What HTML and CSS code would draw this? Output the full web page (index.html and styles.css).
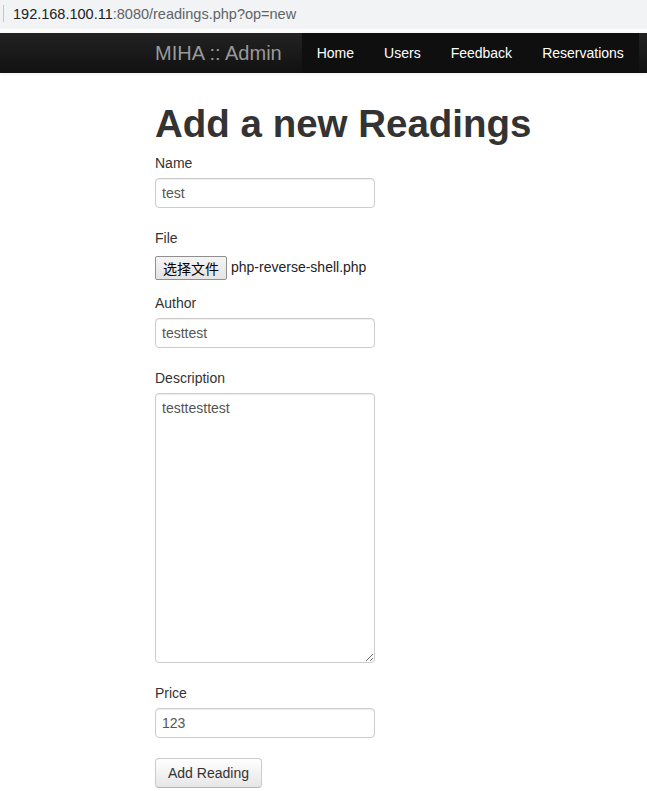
FILE: index.html
```html
<!DOCTYPE html>
<html>
<head>
<meta charset="utf-8">
<title>MIHA :: Admin</title>
<link rel="stylesheet" href="styles.css">
</head>
<body>
<div class="addressbar">
  <span class="sep"></span>
  <span class="url"><span class="host">192.168.100.11</span><span class="path">:8080/readings.php?op=new</span></span>
</div>
<div class="gap"></div>
<div class="navbar">
  <div class="navbar-inner">
    <a class="brand" href="#">MIHA :: Admin</a>
    <ul class="nav">
      <li><a href="#">Home</a></li>
      <li><a href="#">Users</a></li>
      <li><a href="#">Feedback</a></li>
      <li><a href="#">Reservations</a></li>
    </ul>
  </div>
</div>
<div class="container">
  <h1>Add a new Readings</h1>
  <form class="form">
    <div class="field">
      <label class="label">Name</label>
      <input class="input" type="text" value="test">
    </div>
    <div class="field field-file">
      <label class="label">File</label>
      <div class="file-row">
        <span class="file-btn">选择文件</span>
        <span class="file-name">php-reverse-shell.php</span>
      </div>
    </div>
    <div class="field">
      <label class="label">Author</label>
      <input class="input" type="text" value="testtest">
    </div>
    <div class="field">
      <label class="label">Description</label>
      <textarea class="textarea">testtesttest</textarea>
    </div>
    <div class="field">
      <label class="label">Price</label>
      <input class="input" type="text" value="123">
    </div>
    <button class="btn" type="button">Add Reading</button>
  </form>
</div>
</body>
</html>
```
FILE: styles.css
```css
html, body {
  margin: 0;
  padding: 0;
  background: #fff;
}
body {
  font-family: "Liberation Sans", Arial, sans-serif;
  font-size: 14px;
  line-height: 20px;
  color: #333;
}
.addressbar {
  height: 29px;
  background: #f1f3f4;
  display: flex;
  align-items: center;
}
.sep {
  width: 1px;
  height: 17px;
  background: #c4c7ca;
  margin-left: 3px;
  margin-top: -2px;
}
.url {
  margin-left: 9px;
  font-size: 14.5px;
  margin-top: -1px;
  white-space: nowrap;
}
.host { color: #202124; }
.path { color: #5f6368; }
.gap {
  height: 4px;
  background: #fff;
}
.navbar {
  height: 40px;
  box-shadow: 0 1px 4px rgba(0,0,0,0.08);
}
.navbar-inner {
  height: 40px;
  background: linear-gradient(to bottom, #222222, #111111);
  display: flex;
  align-items: stretch;
  padding-left: 155px;
}
.brand {
  font-size: 20px;
  line-height: 40px;
  color: #999;
  text-decoration: none;
  padding-right: 20px;
}
.nav {
  list-style: none;
  margin: 0;
  padding: 0;
  display: flex;
  background: #0f0f0f;
}
.nav a {
  display: block;
  padding: 10px 15px;
  color: #fff;
  text-decoration: none;
  font-size: 14px;
  line-height: 20px;
}
.container {
  padding-left: 155px;
  padding-top: 1px;
}
h1 {
  font-size: 38.5px;
  line-height: 40px;
  font-weight: bold;
  color: #333;
  margin: 30px 0 9px;
}
.form {
  margin: 0;
}
.field {
  margin-bottom: 20px;
}
.field-file {
  margin-bottom: 10px;
}
.label {
  display: block;
  margin-bottom: 5px;
  color: #333;
}
.input, .textarea {
  display: block;
  box-sizing: border-box;
  width: 220px;
  height: 30px;
  padding: 4px 6px;
  font-family: "Liberation Sans", Arial, sans-serif;
  font-size: 14px;
  line-height: 20px;
  color: #555;
  background: #fff;
  border: 1px solid #ccc;
  border-radius: 4px;
  box-shadow: inset 0 1px 1px rgba(0,0,0,0.075);
  margin: 0;
}
.textarea {
  height: 270px;
  resize: vertical;
}
.file-row {
  height: 30px;
  display: flex;
  align-items: center;
}
.file-btn {
  box-sizing: border-box;
  height: 24px;
  padding: 0 7px;
  border: 1px solid #8f8f8f;
  border-radius: 2px;
  background: linear-gradient(to bottom, #f4f4f4, #e4e4e4);
  color: #000;
  font-family: "Noto Sans CJK SC", sans-serif;
  font-size: 14px;
  line-height: 22px;
  display: flex;
  align-items: center;
}
.file-name {
  margin-left: 4px;
  margin-top: -3px;
  color: #222;
}
.btn {
  display: block;
  box-sizing: border-box;
  height: 30px;
  padding: 4px 12px;
  font-family: "Liberation Sans", Arial, sans-serif;
  font-size: 14px;
  line-height: 20px;
  color: #333;
  background: linear-gradient(to bottom, #ffffff, #e6e6e6);
  border: 1px solid #ccc;
  border-bottom-color: #b3b3b3;
  border-radius: 4px;
  box-shadow: inset 0 1px 0 rgba(255,255,255,0.2), 0 1px 2px rgba(0,0,0,0.05);
  margin: 0;
}
```
